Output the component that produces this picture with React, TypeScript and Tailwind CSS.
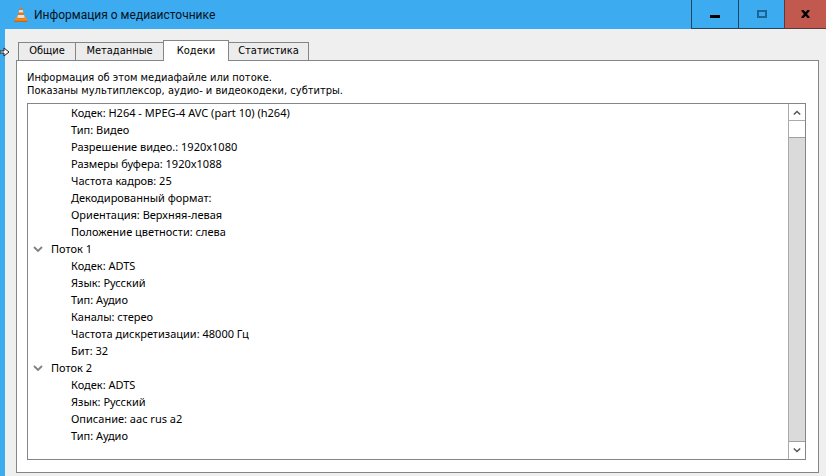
import { useState } from "react";
import clsx from "clsx";

const tabs = [
  { label: "Общие", width: "w-[58px]" },
  { label: "Метаданные", width: "w-[89px]" },
  { label: "Кодеки", width: "w-[66px]" },
  { label: "Статистика", width: "w-[81px]" },
];

const videoRows = [
  "Кодек: H264 - MPEG-4 AVC (part 10) (h264)",
  "Тип: Видео",
  "Разрешение видео.: 1920x1080",
  "Размеры буфера: 1920x1088",
  "Частота кадров: 25",
  "Декодированный формат:",
  "Ориентация: Верхняя-левая",
  "Положение цветности: слева",
];

const streams = [
  {
    title: "Поток 1",
    rows: [
      "Кодек: ADTS",
      "Язык: Русский",
      "Тип: Аудио",
      "Каналы: стерео",
      "Частота дискретизации: 48000 Гц",
      "Бит: 32",
    ],
  },
  {
    title: "Поток 2",
    rows: ["Кодек: ADTS", "Язык: Русский", "Описание: aac rus a2", "Тип: Аудио"],
  },
];

const Cone = () => (
  <svg viewBox="0 0 16 16" className="h-4 w-4" aria-hidden="true">
    <path d="M3 10h10l1.8 4.4H1.2z" fill="#ef8d22" />
    <path d="M1.2 13.6h13.6V15H1.2z" fill="#bd6c1c" />
    <path d="M7 .4h2l3 10.8c-1.4 1.1-6.6 1.1-8 0z" fill="#e0761d" />
    <path d="M6.3 3h3.4l.7 2.4H5.6z" fill="#e6e0dc" />
    <path d="M4.9 8h6.2l.7 2.4c-1.6.8-6 .8-7.6 0z" fill="#e6e0dc" />
  </svg>
);

const Chevron = ({ up = false, className }: { up?: boolean; className?: string }) => (
  <svg viewBox="0 0 10 6" className={clsx("h-[6px]", className)} fill="none" stroke="currentColor" strokeWidth="1.8" aria-hidden="true">
    <path d={up ? "M1 5l4-4 4 4" : "M1 1l4 4 4-4"} />
  </svg>
);

const TitleBar = () => (
  <header className="flex h-[29px] bg-[#3cabef] text-[#06121c]">
    <div className="flex flex-1 items-center gap-[5px] pl-[13px]">
      <Cone />
      <h1 className="font-['Roboto','Noto_Sans',sans-serif] text-[12px]">Информация о медиаисточнике</h1>
    </div>
    <button aria-label="Свернуть" className="flex w-[47px] items-center justify-center border-b border-l border-[#1f4560]">
      <span className="mt-1 h-[3px] w-[10px] bg-black" />
    </button>
    <button aria-label="Развернуть" className="flex w-[46px] items-center justify-center border-b border-l border-[#1f4560]">
      <span className="h-2 w-[10px] border-2 border-[#1a6796]" />
    </button>
    <button aria-label="Закрыть" className="flex w-[42px] items-center justify-center border-b border-l border-[#5c3a3c] bg-[#c2594f]">
      <svg viewBox="0 0 9 8" className="h-2 w-[9px]" stroke="#000" strokeWidth="2.4" aria-hidden="true">
        <path d="M1 0l7 8M8 0L1 8" />
      </svg>
    </button>
  </header>
);

const ScrollBar = () => (
  <div className="flex w-[17px] flex-col border-l border-[#aaa] bg-white py-px text-[#555]">
    <button aria-label="Вверх" className="flex h-4 items-center justify-center border-b border-[#aaa]">
      <Chevron up className="w-2" />
    </button>
    <div className="h-4" />
    <div className="flex-1 border-y border-[#a0a0a0] bg-[#dadada]" />
    <button aria-label="Вниз" className="flex h-4 items-center justify-center">
      <Chevron className="w-2" />
    </button>
  </div>
);

const Rows = ({ rows }: { rows: string[] }) => (
  <ul className="pl-[43px]">
    {rows.map((row) => (
      <li key={row}>{row}</li>
    ))}
  </ul>
);

const CodecTree = () => {
  const [closed, setClosed] = useState<string[]>([]);

  const toggle = (title: string) => {
    setClosed(closed.includes(title) ? closed.filter((t) => t !== title) : [...closed, title]);
  };

  return (
    <div className="mt-[6px] flex flex-1 border border-[#82858a] bg-white">
      <div className="flex-1 font-['Noto_Sans','Open_Sans',sans-serif] text-[11px] leading-[17px]">
        <Rows rows={videoRows} />
        {streams.map(({ title, rows }) => (
          <section key={title}>
            <button onClick={() => toggle(title)} aria-expanded={!closed.includes(title)} className="flex h-[17px] items-center gap-2 pl-[5px]">
              <Chevron className="w-[10px] text-[#808080]" />
              {title}
            </button>
            {!closed.includes(title) && <Rows rows={rows} />}
          </section>
        ))}
      </div>
      <ScrollBar />
    </div>
  );
};

export default function App() {
  const [active, setActive] = useState("Кодеки");

  return (
    <div className="relative flex min-h-screen flex-col bg-[#efeff0] text-black">
      <TitleBar />
      <main className="flex flex-1 flex-col border-l-[5px] border-[#3cabef] pt-[11px] pr-[7px] pb-[3px] pl-[11px] font-['DejaVu_Sans_Condensed','DejaVu_Sans',sans-serif] text-[11px]">
        <div role="tablist" className="flex h-[21px] items-end pl-[2px]">
          {tabs.map(({ label, width }) => (
            <button
              key={label}
              role="tab"
              aria-selected={active === label}
              onClick={() => setActive(label)}
              className={clsx(
                "-mr-px border border-[#82858a]",
                width,
                active === label ? "z-10 h-[21px] border-b-0 bg-white" : "h-[19px] bg-[#ececed]",
              )}
            >
              {label}
            </button>
          ))}
        </div>
        <div role="tabpanel" className="-mt-px flex flex-1 flex-col border border-[#82858a] bg-white pt-[10px] pr-[12px] pb-[12px] pl-[10px]">
          <p className="leading-[13px]">
            Информация об этом медиафайле или потоке.
            <br />
            Показаны мультиплексор, аудио- и видеокодеки, субтитры.
          </p>
          <CodecTree />
        </div>
      </main>
      <svg viewBox="0 0 10 10" className="absolute top-[47px] left-0 h-[10px] w-[10px]" aria-hidden="true">
        <path d="M0 4h4V1l5 4-5 4V6H0z" fill="#fff" stroke="#222" strokeWidth="1" />
      </svg>
    </div>
  );
}
